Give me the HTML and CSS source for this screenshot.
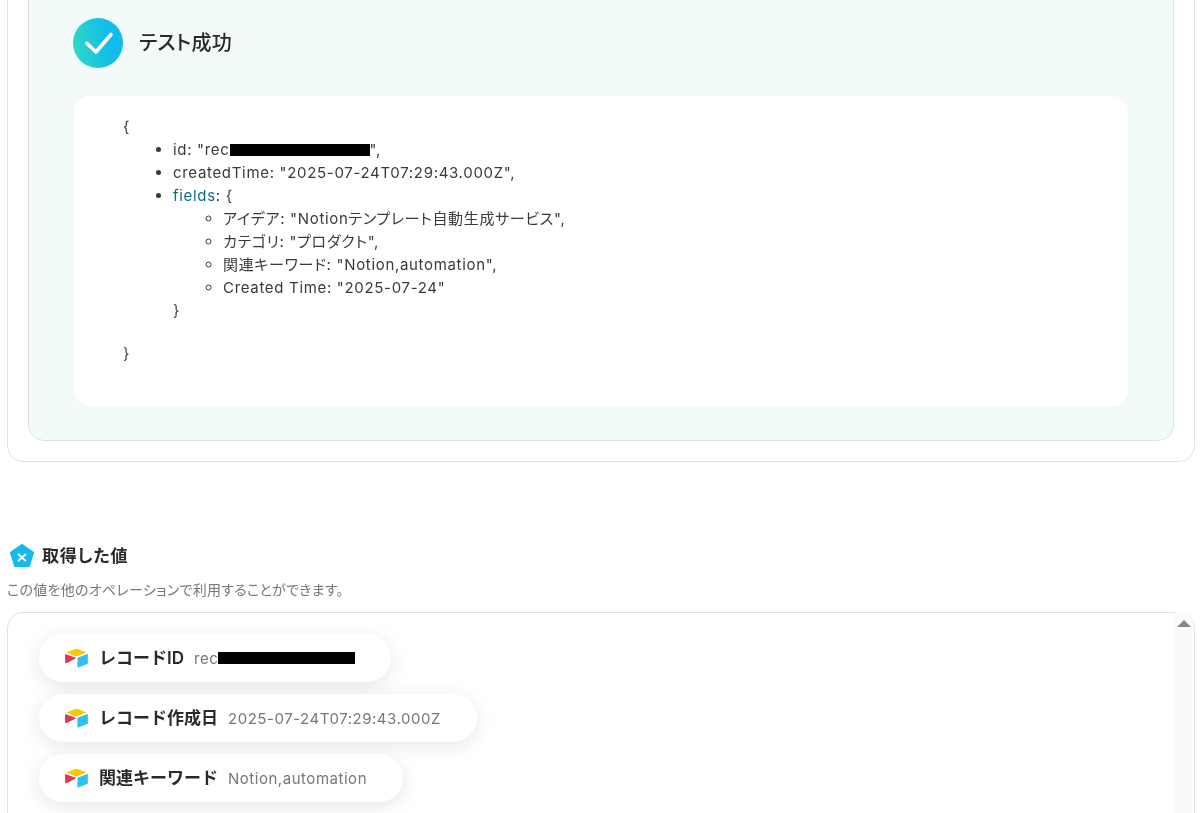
FILE: index.html
```html
<!DOCTYPE html>
<html lang="ja">
<head>
<meta charset="utf-8">
<title>テスト成功</title>
<link rel="stylesheet" href="styles.css">
</head>
<body>
<main class="page">
  <section class="outer-card">
    <div class="result-panel">
      <header class="result-head">
        <svg class="check-icon" viewBox="0 0 50 50" aria-hidden="true">
          <defs>
            <linearGradient id="checkGrad" x1="0" y1="0.6" x2="1" y2="0.4">
              <stop offset="0" stop-color="#2dd9c5"/>
              <stop offset="0.75" stop-color="#12bbea"/>
            </linearGradient>
          </defs>
          <circle cx="25" cy="25" r="25" fill="url(#checkGrad)"/>
          <path d="M14 25.5 L23 34 L38 16.5" fill="none" stroke="#fff" stroke-width="3.6" stroke-linecap="round" stroke-linejoin="round"/>
        </svg>
        <h2 class="result-title">テスト成功</h2>
      </header>
      <div class="code-box">
        <p class="code-line">{</p>
        <ul class="code-list">
          <li>id: "rec<span class="redact redact-id"></span>",</li>
          <li>createdTime: "2025-07-24T07:29:43.000Z",</li>
          <li><span class="key-link">fields</span>: {
            <ul class="code-sublist">
              <li>アイデア: "Notionテンプレート自動生成サービス",</li>
              <li>カテゴリ: "プロダクト",</li>
              <li>関連キーワード: "Notion,automation",</li>
              <li>Created Time: "2025-07-24"</li>
            </ul>
            <p class="code-close">}</p>
          </li>
        </ul>
        <p class="code-line code-end">}</p>
      </div>
    </div>
  </section>

  <section class="values">
    <h3 class="values-title">
      <svg class="pentagon" viewBox="0 -2 26 26" aria-hidden="true">
        <path d="M13 1.5 L24.4 9.6 L20.3 22.6 Q20 24 18.5 24 L7.5 24 Q6 24 5.7 22.6 L1.6 9.6 Z" fill="#12bbea" stroke="#12bbea" stroke-width="1.5" stroke-linejoin="round"/>
        <path d="M9.6 11.5 L16.4 17.5 M16.4 11.5 L9.6 17.5" stroke="#fff" stroke-width="2" stroke-linecap="round"/>
      </svg>
      取得した値
    </h3>
    <p class="values-note">この値を他のオペレーションで利用することができます。</p>
    <div class="values-box">
      <div class="chip">
        <svg class="airtable" viewBox="0 -0.5 24 21" aria-hidden="true"><use href="#airtable-mark"/></svg>
        <span class="chip-name">レコードID</span>
        <span class="chip-value">rec<span class="redact redact-chip"></span></span>
      </div>
      <div class="chip">
        <svg class="airtable" viewBox="0 -0.5 24 21" aria-hidden="true"><use href="#airtable-mark"/></svg>
        <span class="chip-name">レコード作成日</span>
        <span class="chip-value">2025-07-24T07:29:43.000Z</span>
      </div>
      <div class="chip">
        <svg class="airtable" viewBox="0 -0.5 24 21" aria-hidden="true"><use href="#airtable-mark"/></svg>
        <span class="chip-name">関連キーワード</span>
        <span class="chip-value">Notion,automation</span>
      </div>
      <div class="scroll-track"><span class="scroll-up"></span></div>
    </div>
  </section>
</main>
<svg class="defs" aria-hidden="true">
  <symbol id="airtable-mark" viewBox="0 0 24 21">
    <path d="M10.6 0.5 L2 4 Q1.5 4.3 2 4.6 L10.6 8 Q12 8.5 13.4 8 L22 4.6 Q22.5 4.3 22 4 L13.4 0.5 Q12 0 10.6 0.5Z" fill="#fcc800"/>
    <path d="M13 10.2 V19.6 Q13 20.4 13.8 20.1 L23.2 16.4 Q24 16 24 15.4 V6.2 Q24 5.5 23.2 5.8 L13.7 9.4 Q13 9.6 13 10.2Z" fill="#2dc1f2"/>
    <path d="M11 10.4 L3 14.6 Q0 16 0 15 V6.6 Q0 5.5 1 6 L11 9.8 Q11.5 10 11 10.4Z" fill="#e8344f"/>
  </symbol>
</svg>
</body>
</html>
```
FILE: styles.css
```css
* { box-sizing: border-box; }
html, body { margin: 0; height: 813px; overflow: hidden; background: #fff; }
body {
  font-family: Inter, "Noto Sans CJK JP", sans-serif;
  color: #333;
  font-feature-settings: "palt";
}
p, h2, h3, ul { margin: 0; padding: 0; }
.page { margin-top: -100px; padding: 0 6px 0 7px; will-change: transform; }
.defs { width: 0; height: 0; position: absolute; }

.outer-card {
  height: 562px;
  border: 1px solid #e2e2e2;
  border-radius: 16px;
  padding: 0 20px 20px;
}
.result-panel {
  height: 540px;
  background: #f2fbfa;
  border: 1px solid #e2e2e2;
  border-radius: 16px;
  padding: 116px 45px 0 44px;
}
.result-head { display: flex; align-items: center; gap: 16px; height: 50px; }
.check-icon { width: 50px; height: 50px; flex: none; }
.result-title { font-size: 20px; font-weight: 500; letter-spacing: 0.3px; color: #2a2a2a; line-height: 50px; }

.code-box {
  margin: 28px 0 0 1px;
  height: 310px;
  background: #fff;
  border-radius: 16px;
  padding: 19px 49px;
  font-size: 15px;
  line-height: 23px;
  letter-spacing: 0.68px;
  color: #3a3a3a;
}
.code-list { padding-left: 50px; list-style: disc; }
.code-sublist { padding-left: 50px; list-style: circle; }
.code-end { margin-top: 20px; }
.key-link { color: #0d6a8a; }
.redact { display: inline-block; background: #000; vertical-align: middle; }
.redact-id { width: 140px; height: 12px; margin-top: -2px; }

.values { margin-top: 80px; }
.values-title {
  display: flex;
  align-items: center;
  gap: 7px;
  height: 26px;
  padding: 0 0 2px 2px;
  font-size: 17px;
  font-weight: 600;
  letter-spacing: 0.8px;
  color: #2a2a2a;
}
.pentagon { width: 26px; height: 26px; flex: none; }
.values-note { margin-top: 13px; font-size: 14px; line-height: 18px; letter-spacing: 0.28px; color: #777; }
.values-box {
  position: relative;
  margin-top: 13px;
  height: 240px;
  border: 1px solid #e2e2e2;
  border-radius: 16px;
  padding: 21px 0 0 31px;
  display: flex;
  flex-direction: column;
  align-items: flex-start;
  gap: 12px;
}
.chip {
  display: flex;
  align-items: center;
  height: 48px;
  padding: 0 36px 0 26px;
  background: #fff;
  border-radius: 24px;
  box-shadow: 0 4px 20px rgba(0, 0, 0, 0.1);
}
.airtable { width: 23px; height: 20px; flex: none; margin-right: 11px; }
.chip-name {
  font-size: 17px;
  line-height: 24px;
  font-weight: 600;
  font-feature-settings: normal;
  color: #2a2a2a;
  margin: -1px 10px 0 0;
}
.chip-value { font-size: 15px; letter-spacing: 0.53px; color: #777; }
.redact-chip { width: 137px; height: 12px; margin-top: -2px; }

.scroll-track {
  position: absolute;
  top: -1px;
  right: 1px;
  width: 18px;
  height: 240px;
  background: #fafafa;
}
.scroll-up {
  position: absolute;
  top: 8px;
  left: 2px;
  width: 0;
  height: 0;
  border-left: 7px solid transparent;
  border-right: 7px solid transparent;
  border-bottom: 7px solid #888;
}
```
